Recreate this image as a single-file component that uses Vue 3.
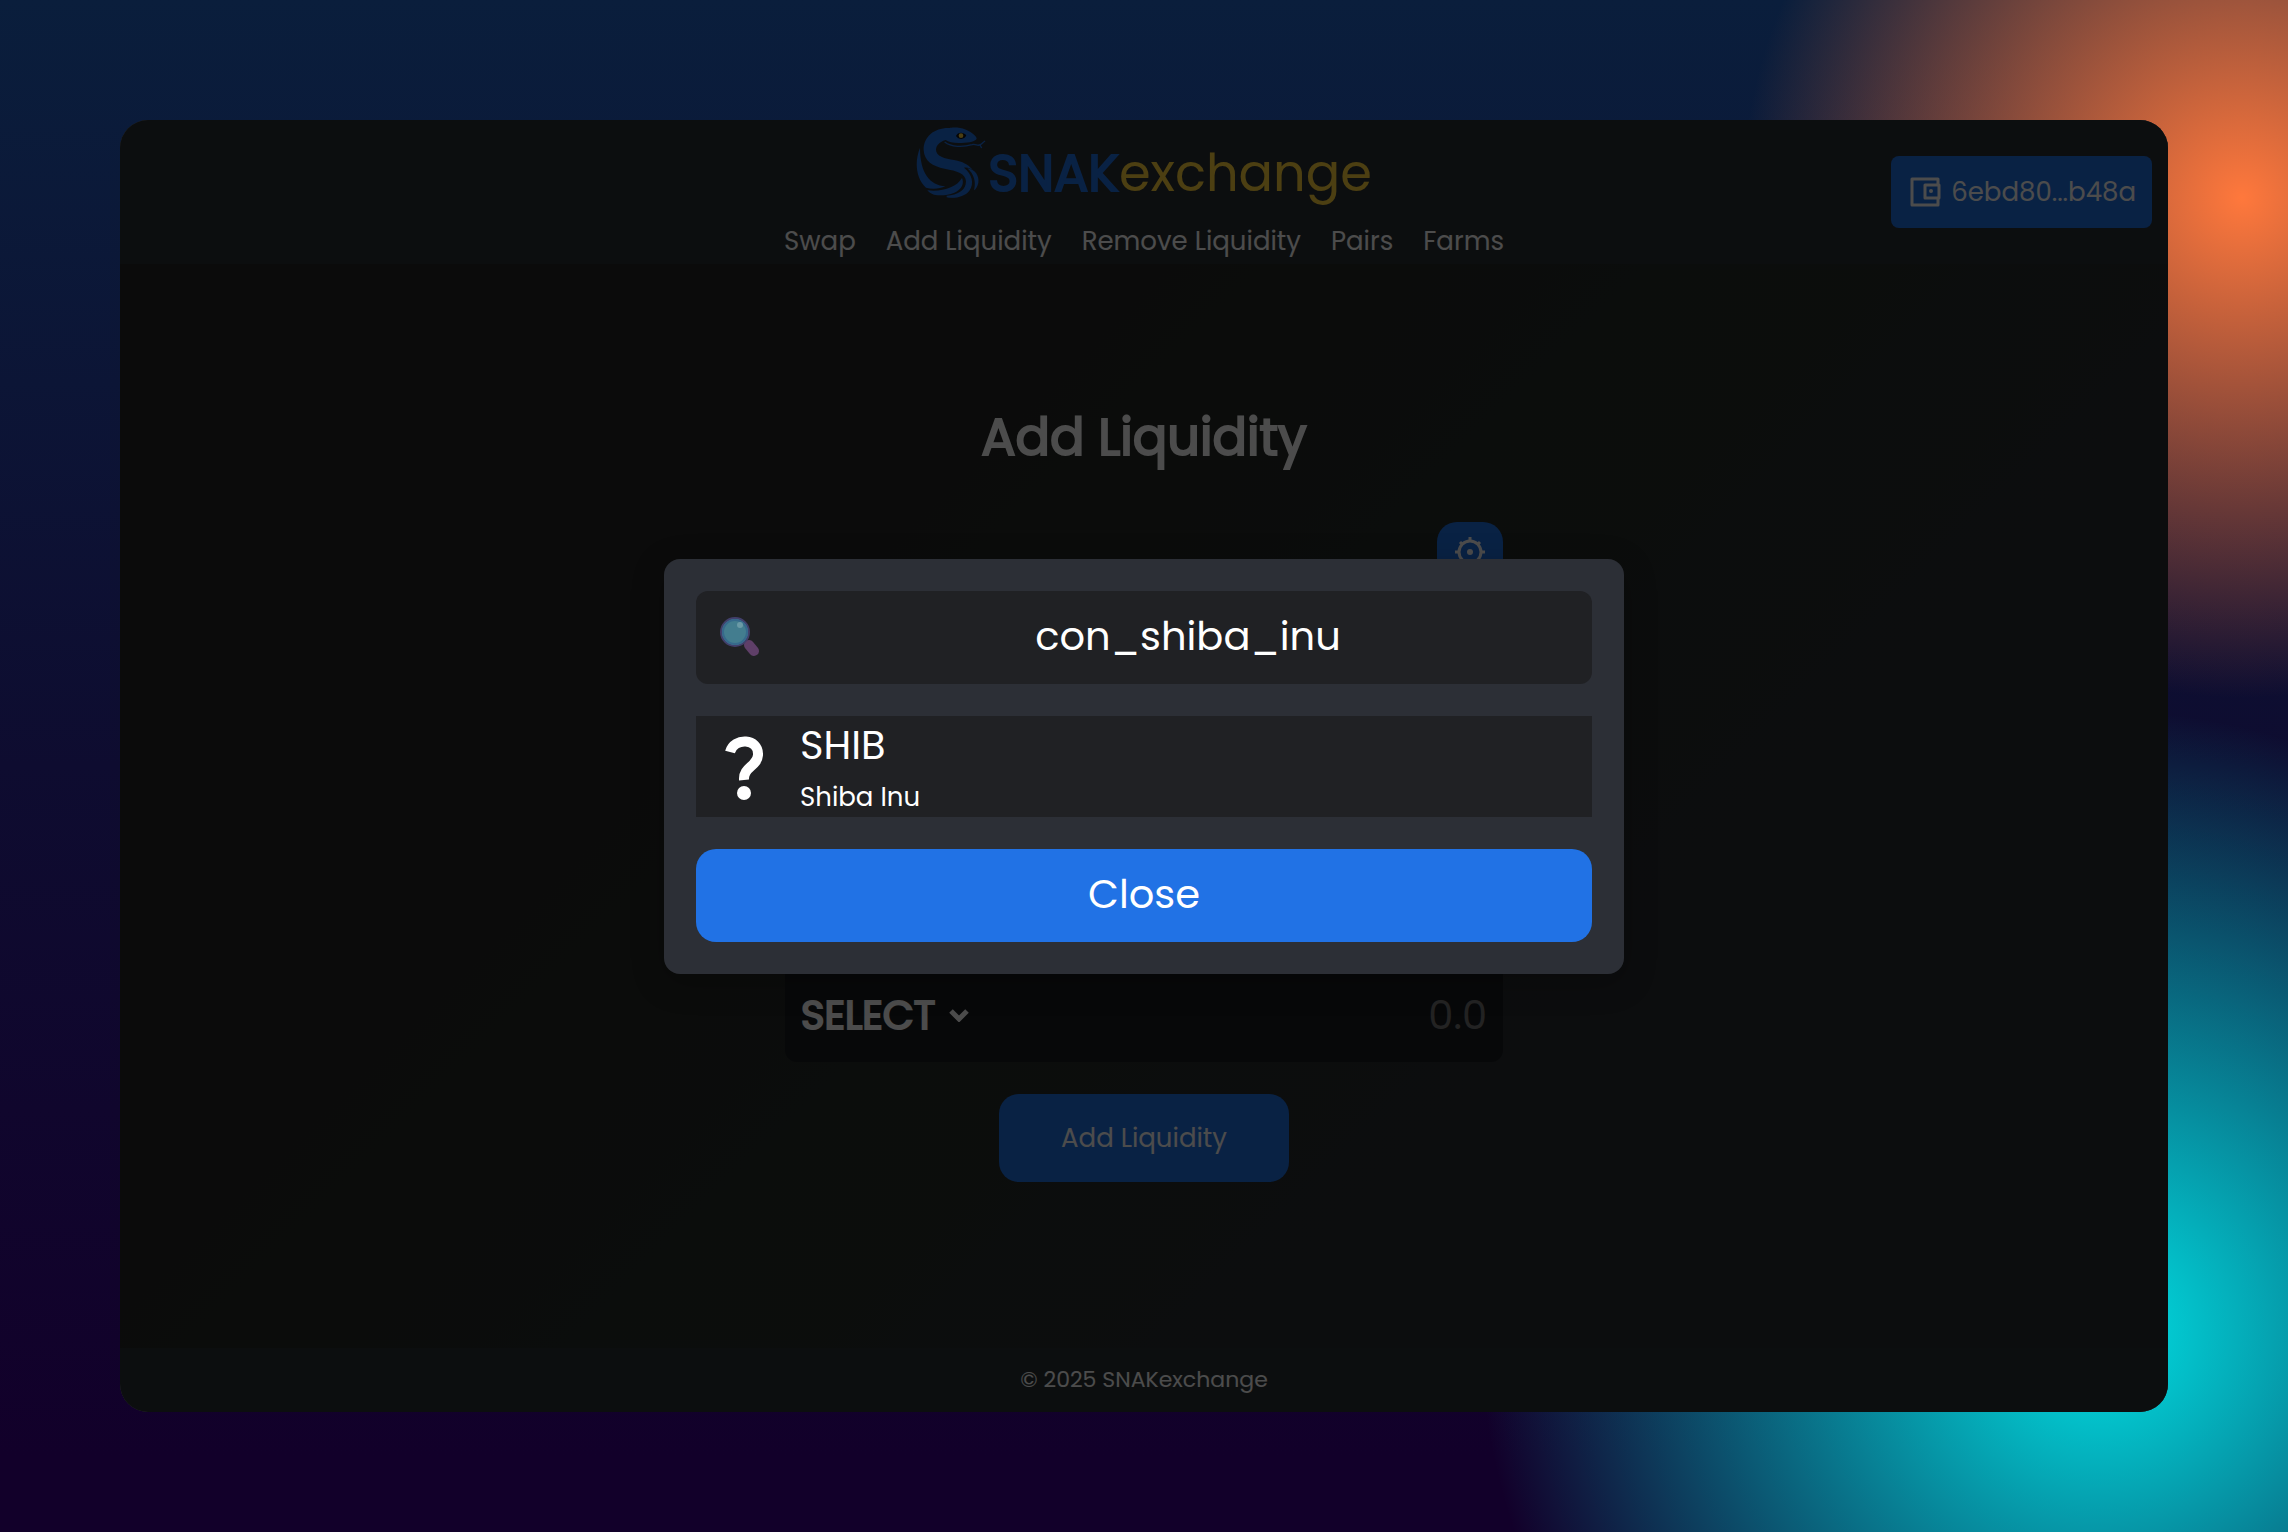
<script setup>
import { ref } from 'vue'

const links = ['Swap', 'Add Liquidity', 'Remove Liquidity', 'Pairs', 'Farms']
const query = ref('con_shiba_inu')
const amount = ref('')
</script>

<template>
  <div class="desktop">
    <div class="window">
      <header class="header">
        <div class="brand-col">
          <a class="brand" href="#">
            <svg class="snake" viewBox="54 32 210 214" aria-hidden="true">
              <path fill="#2172e5" d="M77 100C76 58 112 32 155 34C162 31 190 32 200 38C215 44 233 55 236 65C234 75 215 78 190 79C170 80 152 77 143 70C122 76 111 90 115 105C120 124 152 126 178 132C200 137 216 148 224 160C216 153 205 151 198 153C222 172 230 200 214 222C200 240 172 246 148 242C180 240 204 222 204 194C203 170 178 163 140 156C104 149 79 134 77 100Z" />
              <path fill="#2172e5" d="M208 155C232 158 244 178 241 198C238 210 234 217 228 221C235 195 228 172 208 155Z" />
              <path fill="#2172e5" d="M66 94C50 132 52 184 84 213C104 219 126 216 142 209C96 206 66 170 66 94Z" />
              <path fill="#2172e5" d="M88 221C134 226 176 212 192 184C206 218 160 243 108 234C99 231 92 226 88 221Z" />
              <path fill="#2172e5" d="M146 237C180 236 200 220 206 200C208 228 180 246 146 242Z" />
              <path fill="none" stroke="#2172e5" stroke-width="4" d="M140 76C160 92 195 92 222 84C234 80 238 90 247 84C253 80 254 78 261 73M246 85L251 94" />
              <path fill="#111" d="M174 58C178 46 196 44 205 56C200 70 182 70 174 58Z" />
              <circle cx="189" cy="57" r="7" fill="#ffd23c" />
            </svg>
            <span class="wordmark"><b>SNAK</b>exchange</span>
          </a>
          <nav class="nav">
            <a v-for="link in links" :key="link" href="#">{{ link }}</a>
          </nav>
        </div>
        <button class="wallet" type="button">
          <svg viewBox="0 0 32 32" aria-hidden="true">
            <path fill="none" stroke="currentColor" stroke-width="3" stroke-linejoin="round" d="M29 8V3H3V29H29V23M16 9H30V22H16Z" />
            <circle cx="22" cy="15" r="2" fill="currentColor" />
          </svg>
          <span>6ebd80...b48a</span>
        </button>
      </header>

      <main class="main">
        <h1>Add Liquidity</h1>
        <div class="form">
          <button class="settings" type="button" aria-label="Settings">
            <svg viewBox="0 0 32 32" aria-hidden="true">
              <circle cx="16" cy="16" r="11" fill="none" stroke="currentColor" stroke-width="3" />
              <circle cx="16" cy="16" r="3" fill="currentColor" />
              <path stroke="currentColor" stroke-width="3" d="M16 5V1M16 27V31M5 16H1M27 16H31M8 8L6 6M24 8L26 6M8 24L6 26M24 24L26 26" />
            </svg>
          </button>
          <div class="panel panel-first"></div>
          <div class="panel">
            <button class="select" type="button">
              SELECT
              <svg viewBox="0 0 20 14" aria-hidden="true">
                <path fill="none" stroke="currentColor" stroke-width="5" d="M2 3L10 11L18 3" />
              </svg>
            </button>
            <input v-model="amount" class="amount" aria-label="Amount" placeholder="0.0" />
          </div>
          <button class="submit" type="button">Add Liquidity</button>
        </div>
      </main>

      <footer class="footer">© 2025 SNAKexchange</footer>

      <div class="overlay">
        <section class="modal" role="dialog" aria-label="Select a token">
          <label class="search">
            <svg viewBox="0 0 40 40" aria-hidden="true">
              <path stroke="#4f355c" stroke-width="4" d="M24 23L28 27" />
              <path stroke="#5f3f68" stroke-width="10" stroke-linecap="round" d="M29 28L34 34" />
              <circle cx="15" cy="15" r="14" fill="#437d8f" stroke="#42406c" stroke-width="2" />
              <circle cx="15" cy="15" r="12" fill="none" stroke="#36698c" stroke-width="2" />
              <circle cx="20" cy="8" r="3" fill="#6a9aa6" />
            </svg>
            <input v-model="query" aria-label="Search token" />
          </label>
          <button class="token" type="button">
            <svg viewBox="0 0 40 66" aria-hidden="true">
              <path fill="none" stroke="#fff" stroke-width="10" d="M6 18C10 3 35 4 34 21C33 33 19 33 20 46" />
              <circle cx="20" cy="59" r="7" fill="#fff" />
            </svg>
            <span class="token-text">
              <span class="symbol">SHIB</span>
              <span class="name">Shiba Inu</span>
            </span>
          </button>
          <button class="close" type="button">Close</button>
        </section>
      </div>
    </div>
  </div>
</template>

<style>
body {
  margin: 0;
}
</style>

<style scoped>
* {
  box-sizing: border-box;
}

button,
input {
  border: 0;
  padding: 0;
  background: none;
  color: inherit;
  font: inherit;
}

.desktop {
  display: flex;
  min-height: 100vh;
  padding: 120px;
  background:
    radial-gradient(circle 500px at calc(100% - 46px) 198px, #ff783c 0%, #ff783c00 100%),
    radial-gradient(circle 620px at calc(100% - 188px) calc(100% - 202px), #00e0e4 0%, #00e0e400 100%),
    linear-gradient(#0a1e3c 0%, #0e0c30 50%, #12002a 95%);
  font-family: Poppins, Inter, sans-serif;
  font-size: 26px;
  color: #fff;
}

.window {
  position: relative;
  display: flex;
  flex: 1;
  flex-direction: column;
  overflow: hidden;
  border-radius: 28px;
  background: linear-gradient(135deg, #252525 30%, #272c28 50%, #282c30 70%);
}

.header {
  display: grid;
  grid-template-columns: 1fr auto 1fr;
  align-items: center;
  height: 144px;
  padding: 0 16px;
  background: #2b3034;
}

.brand-col {
  grid-column: 2;
  display: flex;
  flex-direction: column;
  align-items: center;
  gap: 18px;
}

.brand {
  display: flex;
  align-items: flex-start;
  gap: 2px;
  height: 80px;
  text-decoration: none;
}

.snake {
  width: 70px;
  height: 72px;
}

.wordmark {
  padding-top: 14px;
  font-size: 51px;
  line-height: 64px;
  color: #ffd23c;
}

.wordmark b {
  font-weight: 400;
  color: #2172e5;
  -webkit-text-stroke: 2px currentColor;
}

.nav {
  display: flex;
  gap: 30px;
  line-height: 32px;
}

.nav a {
  color: inherit;
  text-decoration: none;
}

.wallet {
  display: flex;
  align-items: center;
  justify-self: end;
  gap: 10px;
  height: 72px;
  padding: 0 16px 0 18px;
  border-radius: 8px;
  background: #2172e5;
}

.wallet svg {
  width: 32px;
  height: 32px;
}

.main {
  flex: 1;
  display: flex;
  flex-direction: column;
  align-items: center;
}

h1 {
  margin: 136px 0 48px;
  font-size: 51px;
  font-weight: 400;
  line-height: 74px;
  -webkit-text-stroke: 2px currentColor;
}

.form {
  display: flex;
  flex-direction: column;
  align-items: center;
  gap: 32px;
  width: 718px;
}

.settings {
  display: grid;
  place-items: center;
  align-self: flex-end;
  width: 66px;
  height: 60px;
  border-radius: 20px;
  background: #2172e5;
}

.settings svg {
  width: 32px;
  height: 32px;
}

.panel {
  display: flex;
  align-items: flex-end;
  justify-content: space-between;
  width: 100%;
  height: 168px;
  padding: 20px 16px;
  border-radius: 12px;
  background: #1a1c20;
  font-size: 40px;
  line-height: 54px;
}

.panel-first {
  height: 248px;
}

.select {
  display: flex;
  align-items: center;
  gap: 14px;
  -webkit-text-stroke: 2px currentColor;
}

.select svg {
  width: 20px;
  height: 14px;
}

.amount {
  width: 280px;
  text-align: right;
}

.amount::placeholder {
  color: #777;
  opacity: 1;
}

.submit {
  height: 88px;
  padding: 0 62px;
  border-radius: 20px;
  background: #2172e5;
}

.footer {
  height: 64px;
  background: #2b3034;
  font-size: 22px;
  line-height: 64px;
  text-align: center;
}

.overlay {
  position: absolute;
  inset: 0;
  display: grid;
  place-items: center;
  background: #000000b3;
}

.modal {
  display: flex;
  flex-direction: column;
  gap: 32px;
  width: 960px;
  padding: 32px;
  border-radius: 16px;
  background: #2c2f36;
  box-shadow: 0 8px 32px #00000040;
  font-size: 40px;
}

.search {
  display: flex;
  align-items: center;
  gap: 16px;
  height: 93px;
  padding: 0 24px;
  border-radius: 12px;
  background: #202124;
}

.search svg {
  width: 40px;
  height: 40px;
}

.search input {
  flex: 1;
  min-width: 0;
  padding: 0 0 2px 32px;
  text-align: center;
  outline: 0;
}

.token {
  display: flex;
  align-items: center;
  gap: 36px;
  height: 101px;
  padding: 2px 28px 0;
  background: #202124;
  text-align: left;
}

.token svg {
  width: 40px;
  height: 66px;
}

.token-text {
  display: flex;
  flex-direction: column;
  gap: 4px;
}

.symbol {
  line-height: 56px;
}

.name {
  font-size: 26px;
  line-height: 40px;
}

.close {
  height: 93px;
  padding-bottom: 2px;
  border-radius: 20px;
  background: #2172e5;
}
</style>
